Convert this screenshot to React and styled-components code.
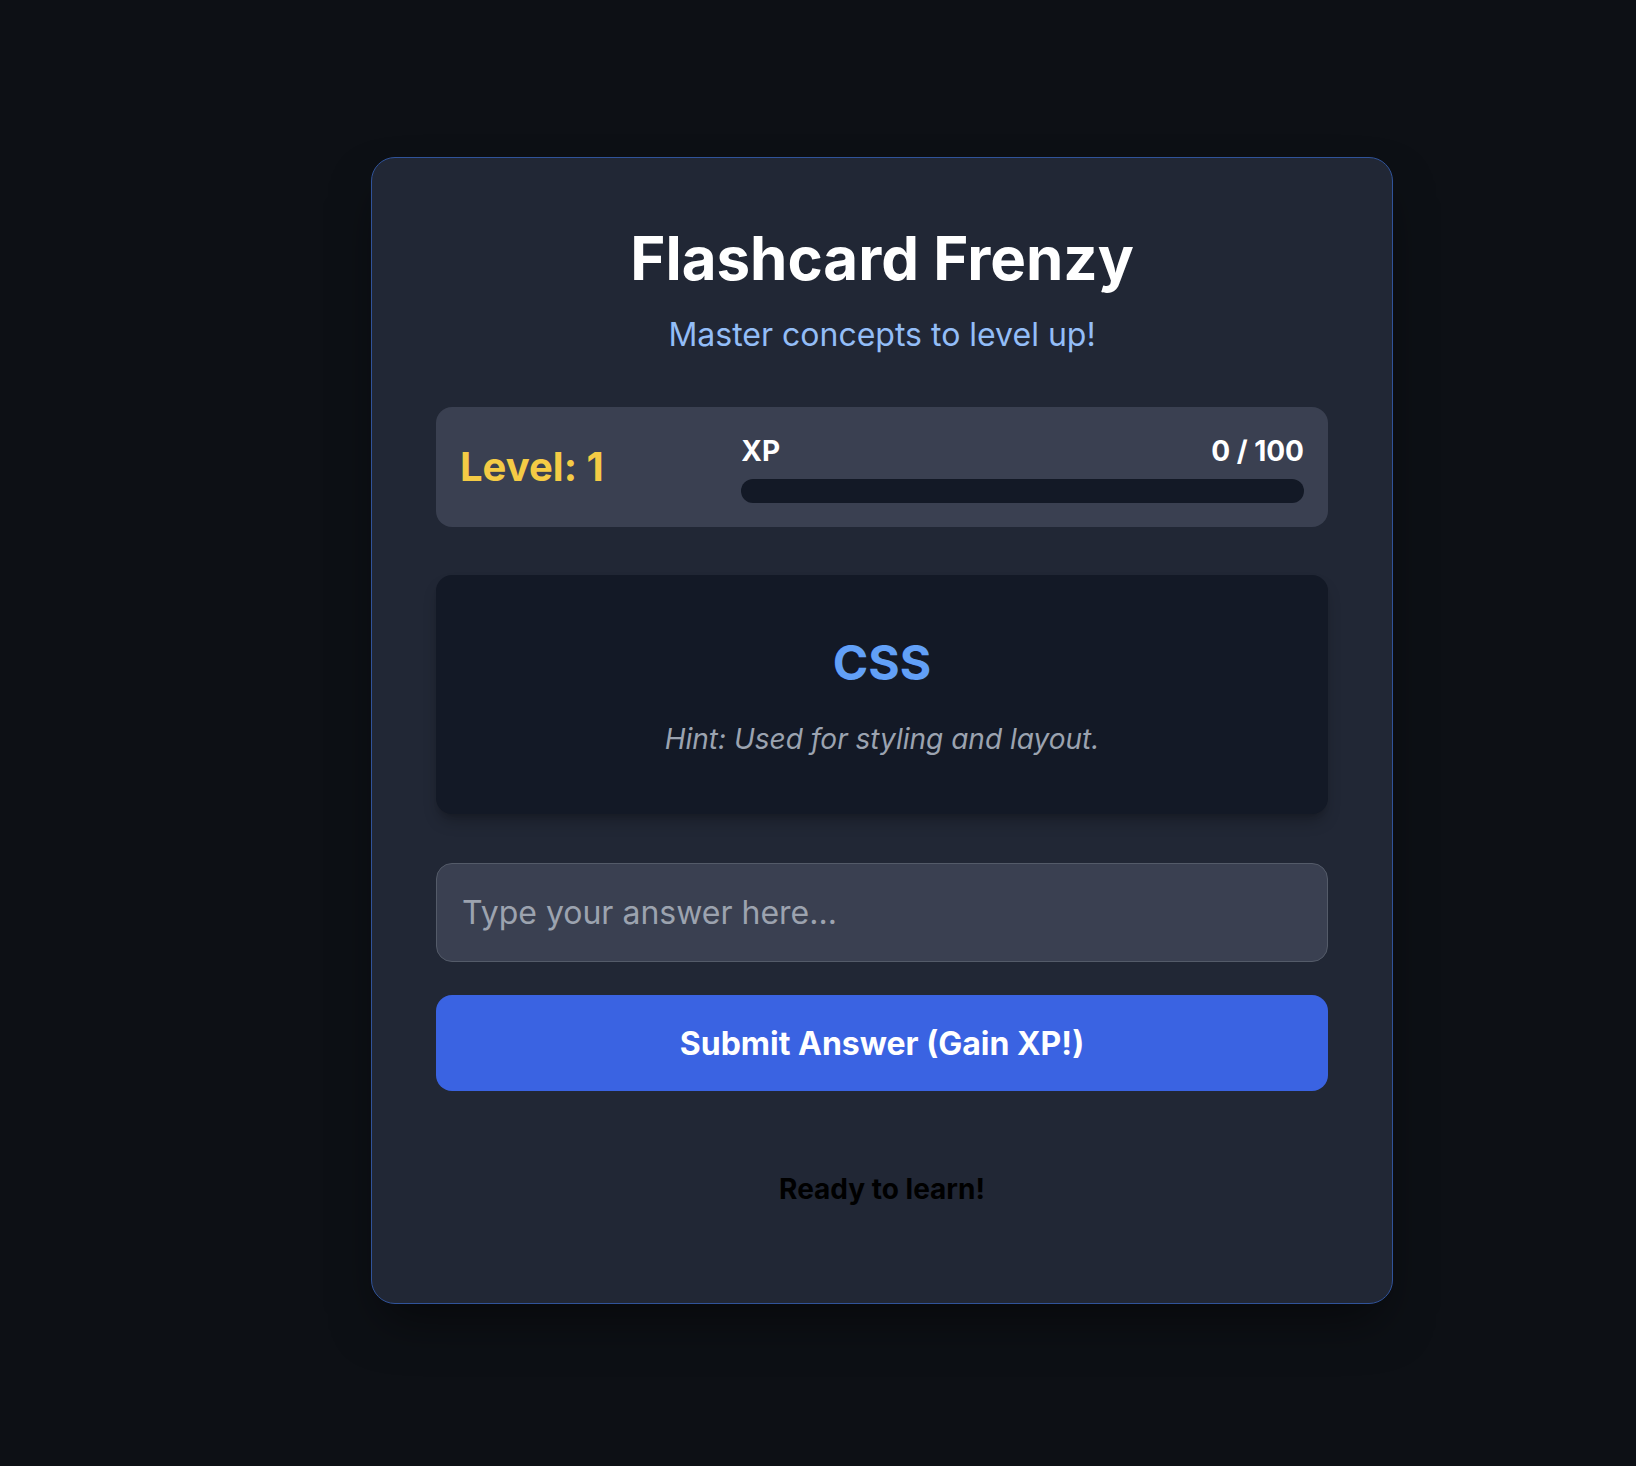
import React from 'react'
import styled, { createGlobalStyle } from 'styled-components'

const GlobalStyle = createGlobalStyle`
  * {
    box-sizing: border-box;
  }
  body {
    margin: 0;
    background: #0d1015;
    font-family: Inter, "Noto Sans", "Liberation Sans", sans-serif;
  }
`

const Page = styled.main`
  min-height: 1466px;
  display: flex;
  align-items: flex-start;
  padding: 157px 0 0 371px;
  background: #0d1015;
`

const Card = styled.section`
  width: 1022px;
  padding: 64px;
  display: flex;
  flex-direction: column;
  background: #212735;
  border: 1px solid #30539a;
  border-radius: 24px;
  box-shadow: 0 25px 50px -12px rgba(0, 0, 0, 0.5);
`

const Title = styled.h1`
  margin: 0;
  font-size: 60px;
  line-height: 72px;
  font-weight: 700;
  color: #ffffff;
  text-align: center;
`

const Subtitle = styled.p`
  margin: 17px 0 0;
  font-size: 32px;
  line-height: 48px;
  color: #93bdf7;
  text-align: center;
`

const Stats = styled.div`
  margin-top: 48px;
  height: 120px;
  padding: 24px;
  display: grid;
  grid-template-columns: 1fr 2fr;
  align-items: center;
  background: #3a4051;
  border-radius: 16px;
`

const Level = styled.div`
  font-size: 40px;
  font-weight: 700;
  line-height: 48px;
  color: #f4cb45;
`

const XpBlock = styled.div`
  display: flex;
  flex-direction: column;
  gap: 8px;
`

const XpRow = styled.div`
  display: flex;
  justify-content: space-between;
  font-size: 28px;
  line-height: 40px;
  font-weight: 700;
  color: #ffffff;
`

const Track = styled.div`
  height: 24px;
  border-radius: 999px;
  background: #131926;
  overflow: hidden;
`

const Fill = styled.div`
  height: 100%;
  background: #3a63e2;
  border-radius: 999px;
`

const Flashcard = styled.div`
  margin-top: 48px;
  height: 239px;
  padding-top: 4px;
  display: flex;
  flex-direction: column;
  align-items: center;
  justify-content: center;
  background: #131926;
  border-radius: 16px;
  box-shadow: 0 10px 15px -3px rgba(0, 0, 0, 0.25), 0 4px 6px -4px rgba(0, 0, 0, 0.2);
`

const Term = styled.h2`
  margin: 0;
  font-size: 48px;
  line-height: 58px;
  font-weight: 700;
  color: #62a0f7;
`

const Hint = styled.p`
  margin: 26px 0 0;
  font-size: 28px;
  line-height: 42px;
  font-style: italic;
  color: #9ba3b0;
`

const AnswerInput = styled.input`
  margin-top: 49px;
  height: 99px;
  width: 100%;
  padding: 0 25px;
  font-family: inherit;
  font-size: 32px;
  color: #ffffff;
  background: #3a4051;
  border: 1px solid #545b69;
  border-radius: 16px;
  outline: none;

  &::placeholder {
    color: #9ca3af;
  }
`

const SubmitButton = styled.button`
  margin-top: 33px;
  height: 96px;
  width: 100%;
  font-family: inherit;
  font-size: 32px;
  font-weight: 700;
  color: #ffffff;
  background: #3a63e2;
  border: none;
  border-radius: 16px;
  cursor: pointer;
`

const Status = styled.div`
  margin-top: 48px;
  height: 100px;
  display: flex;
  align-items: center;
  justify-content: center;
  font-size: 28px;
  font-weight: 700;
  color: #000000;
`

const App = () => {
  const xp = 0
  const maxXp = 100

  return (
    <React.Fragment>
      <GlobalStyle />
      <Page>
        <Card>
          <Title>Flashcard Frenzy</Title>
          <Subtitle>Master concepts to level up!</Subtitle>

          <Stats>
            <Level>Level: 1</Level>
            <XpBlock>
              <XpRow>
                <span>XP</span>
                <span>{xp} / {maxXp}</span>
              </XpRow>
              <Track>
                <Fill style={{ width: `${(xp / maxXp) * 100}%` }} />
              </Track>
            </XpBlock>
          </Stats>

          <Flashcard>
            <Term>CSS</Term>
            <Hint>Hint: Used for styling and layout.</Hint>
          </Flashcard>

          <AnswerInput type="text" placeholder="Type your answer here..." />
          <SubmitButton>Submit Answer (Gain XP!)</SubmitButton>

          <Status>Ready to learn!</Status>
        </Card>
      </Page>
    </React.Fragment>
  )
}

export default App
